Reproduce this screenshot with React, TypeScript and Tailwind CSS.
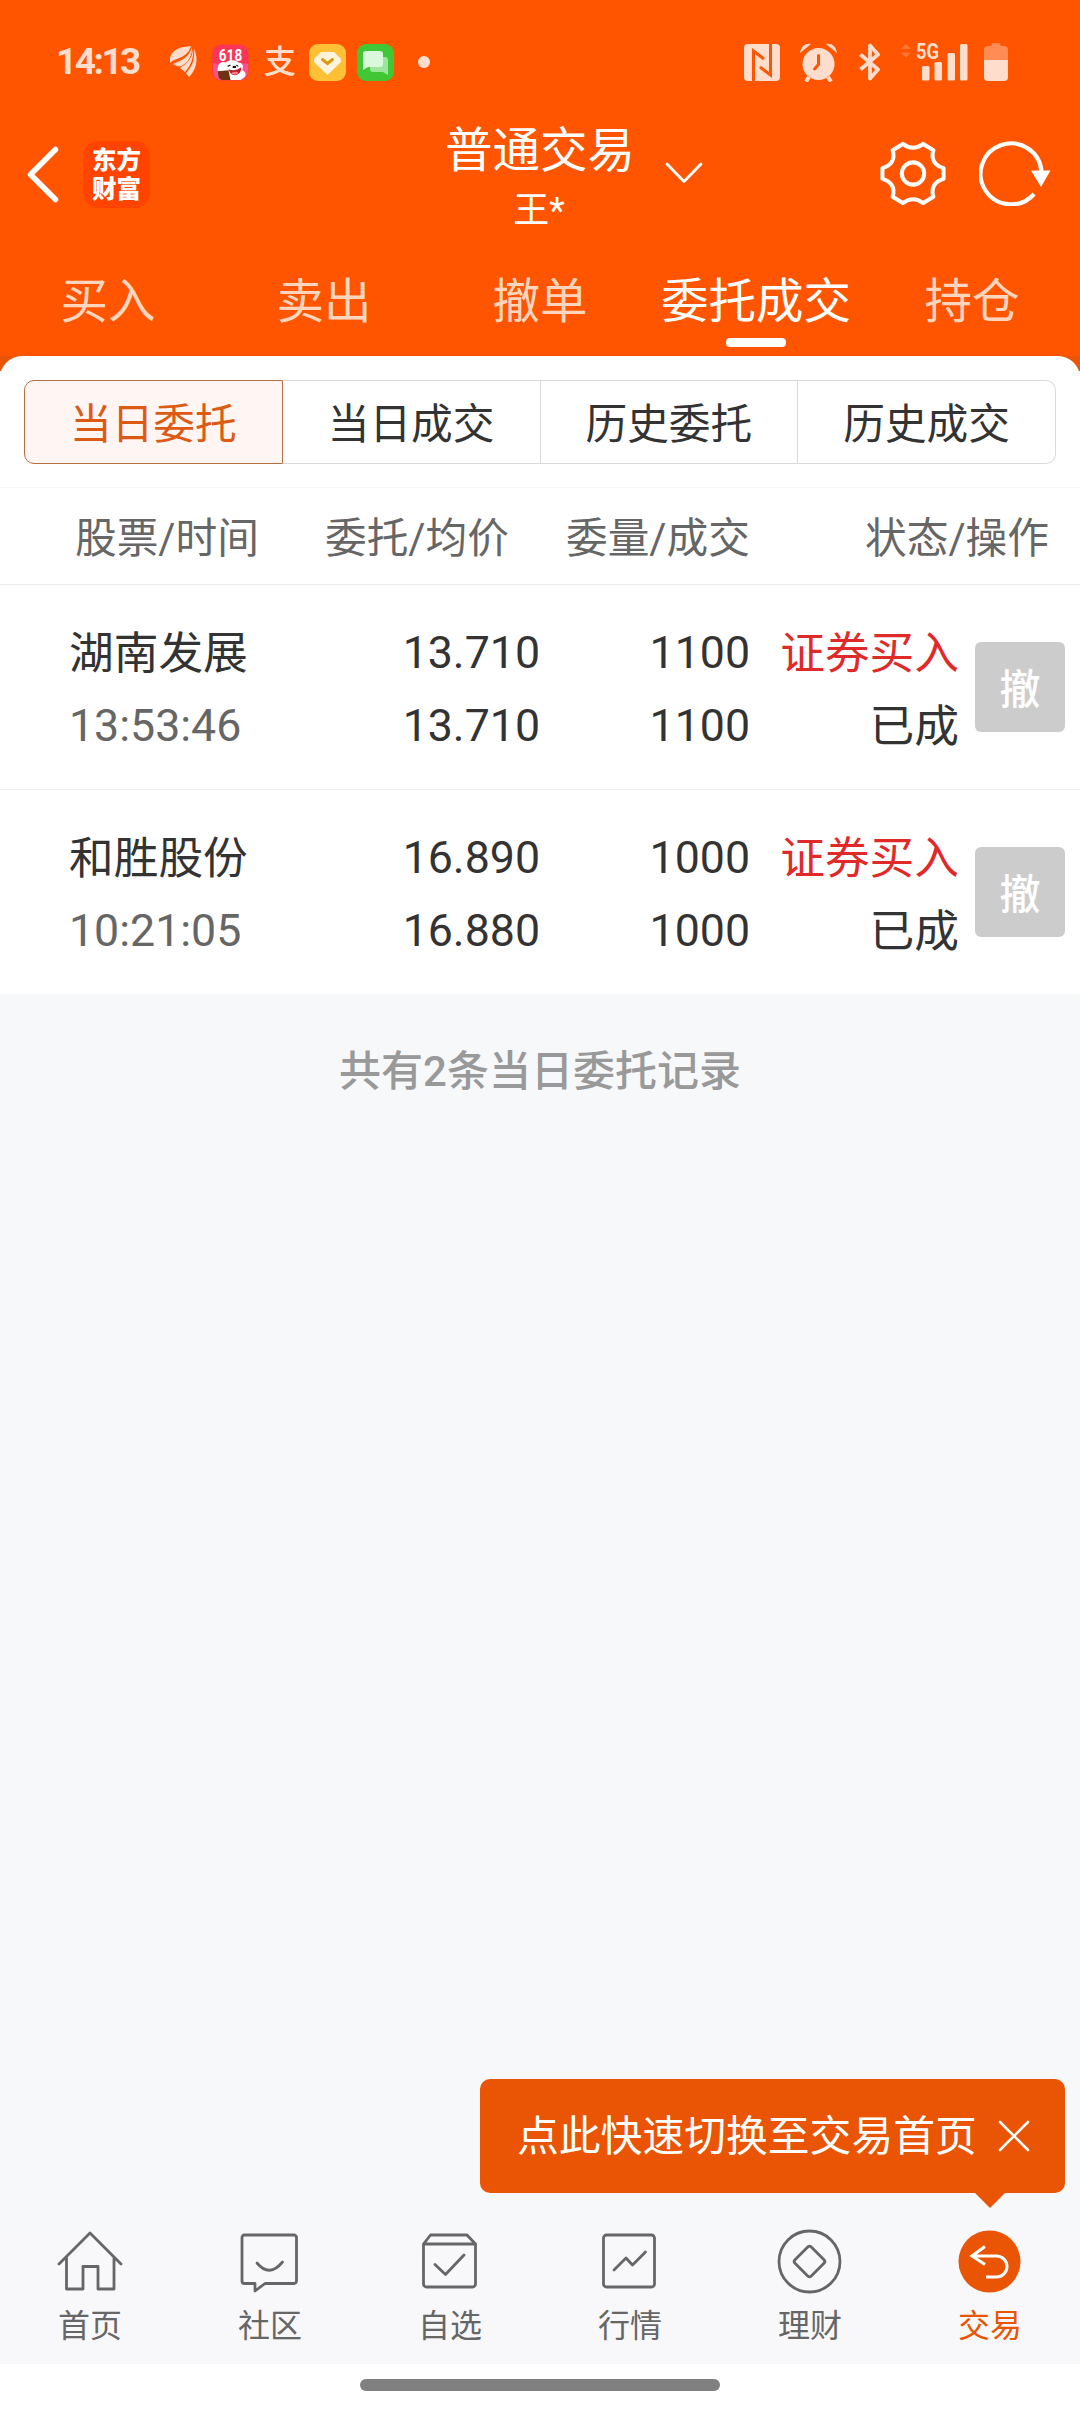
import type { ReactNode } from 'react';

const tabs = ['买入', '卖出', '撤单', '委托成交', '持仓'];
const segments = ['当日委托', '当日成交', '历史委托', '历史成交'];

const orders = [
  { name: '湖南发展', time: '13:53:46', price: '13.710', avg: '13.710', qty: '1100', filled: '1100' },
  { name: '和胜股份', time: '10:21:05', price: '16.890', avg: '16.880', qty: '1000', filled: '1000' },
];

function StatusBar() {
  return (
    <div className="flex h-[124px] items-center pl-[56px] pr-[72px] text-[#ffddcc]">
      <span className="w-[113px] text-[37px] leading-[40px] font-bold tracking-[-2.5px]">14:13</span>

      {/* Notification icons */}
      <svg className="mr-[15px]" width="28" height="32" viewBox="0 0 28 32" fill="currentColor">
        <path d="M22 0C12 1 3 3 1 12V17C7 11 18 13 22 0Z" />
        <path d="M23 1C20 11 14 14 4 18C8 21 12 21 14 19C20 15 23 9 23 1Z" />
        <path d="M24 2C24 11 19 17 11 22L16 26C23 18 25 10 24 2Z" />
        <path d="M25 3C30 13 27 24 20 31L17 27C24 20 26 12 25 3Z" />
      </svg>
      <svg className="mr-[14px]" width="37" height="37" viewBox="0 0 38 38">
        <rect x="0.500" y="0.500" width="37" height="37" rx="9" fill="#fb3558" />
        <path d="M1 20h36v8a9 9 0 0 1-9 9H10a9 9 0 0 1-9-9Z" fill="#f8528c" />
        <text x="19" y="17.500" textAnchor="middle" fontSize="17.500" fontWeight="700" fill="#fff" textLength="24" lengthAdjust="spacingAndGlyphs">618</text>
        <path d="M6 25C6 20 10 17 14 19C18 16 25 16 27 19C31 19 33 22 31 27C36 29 36 34 29 37H18L8 29C6 29 5 27 6 25Z" fill="#fff" />
        <path d="M16 23L19 21.500M27 23L25 21.500" stroke="#222" strokeWidth="1.200" />
        <ellipse cx="23" cy="23.500" rx="2" ry="1.200" fill="#111" />
        <path d="M17 26C21 28 26 27 30 24C30 30 27 32 23 32C20 32 18 29 17 26Z" fill="#b51f2b" />
        <path d="M20 30C22 28 26 28 27 30C25 32 22 32 20 30Z" fill="#ff7a86" />
        <path d="M6 28L17 27L19 37H10L7 35Z" fill="#6e3310" />
      </svg>
      <span className="mr-[11px] ml-px w-[34px] text-[32px] leading-[38px] font-medium">支</span>
      <svg className="mr-[11px]" width="37" height="37" viewBox="0 0 37 37">
        <rect width="37" height="37" rx="9" fill="#fec136" />
        <path d="M12 8H25L32 15V18L18.500 31L5 18V15Z" fill="#fff3dc" />
        <path d="M13.500 15.500L18.500 19.500L23.500 15.500" stroke="#dc9a10" strokeWidth="3" fill="none" strokeLinecap="round" />
      </svg>
      <svg className="mr-[24px]" width="37" height="37" viewBox="0 0 37 37">
        <rect width="37" height="37" rx="9" fill="#41c736" />
        <path d="M13 13H28a3 3 0 0 1 3 3V31L26 28H16a3 3 0 0 1-3-3Z" fill="#9be69a" />
        <path d="M9 7H23a3 3 0 0 1 3 3V20a3 3 0 0 1-3 3H11L6 26V10a3 3 0 0 1 3-3Z" fill="#d9f8dc" />
      </svg>
      <span className="h-3 w-3 rounded-full bg-[#ffddcc]" />

      {/* System icons */}
      <svg className="ml-auto mr-[20px]" width="36" height="37" viewBox="0 0 36 37">
        <rect width="36" height="37" rx="4" fill="currentColor" />
        <path d="M9.500 37V7L20 15M26.500 0V31L16 23" fill="none" stroke="#ff5500" strokeWidth="3" />
      </svg>
      <svg className="mr-[22px]" width="37" height="39" viewBox="0 0 37 39">
        <circle cx="18.500" cy="21" r="16" fill="currentColor" />
        <path d="M0 10C1 3 6 0 11 1ZM37 10C36 3 31 0 26 1Z" fill="currentColor" />
        <path d="M9 34L6 38.500M28 34L31 38.500" stroke="currentColor" strokeWidth="4" />
        <path d="M18.500 12.500V21.500L14.500 26" fill="none" stroke="#ff5500" strokeWidth="3" strokeLinecap="round" />
      </svg>
      <svg className="mr-[20px]" width="22" height="38" viewBox="0 0 22 38">
        <path d="M1.500 11.500L19 26.500L11 35.500V2.500L19 11.500L1.500 26.500" fill="none" stroke="currentColor" strokeWidth="3.800" strokeLinejoin="round" />
      </svg>
      <svg className="mt-[-8px] mr-[16px]" width="67" height="46" viewBox="0 -8 67 46" fill="currentColor">
        <path d="M0 6L5 1L10 6ZM0 9.500L5 14.500L10 9.500Z" fill="#ff7733" />
        <text x="15" y="16" fontSize="22" fontWeight="700" textLength="23" lengthAdjust="spacingAndGlyphs">5G</text>
        <rect x="21" y="23" width="7.500" height="14.500" rx="1.500" />
        <rect x="33.500" y="19" width="7.500" height="18.500" rx="1.500" />
        <rect x="46.500" y="10" width="7.500" height="27.500" rx="1.500" />
        <rect x="59" y="1" width="7.500" height="36.500" rx="1.500" />
      </svg>
      <svg width="24" height="38" viewBox="0 0 24 38">
        <path d="M0 17V7a4 4 0 0 1 4-4H7.500V2a2 2 0 0 1 2-2H14.500a2 2 0 0 1 2 2V3H20a4 4 0 0 1 4 4V17Z" fill="#ff8c54" />
        <path d="M0 17H24V34a4 4 0 0 1-4 4H4a4 4 0 0 1-4-4Z" fill="currentColor" />
      </svg>
    </div>
  );
}

function TitleBar() {
  return (
    <div className="grid h-[112px] grid-cols-[1fr_auto_1fr] items-start text-white">
      <div className="flex pt-[17px] pl-[26px]">
        <svg className="mt-[5px]" width="34" height="57" viewBox="0 0 34 57" fill="none" stroke="#fff" strokeWidth="5.500" strokeLinecap="round" strokeLinejoin="round">
          <path d="M29.500 3.500L4.500 28.500L29.500 53.500" />
        </svg>
        <div className="ml-[23px] flex h-[67px] w-[67px] flex-col items-center justify-center rounded-[15px] bg-[#ff4400] text-[24.500px] leading-[29px] font-black">
          <span>东方</span>
          <span>财富</span>
        </div>
      </div>
      <div className="flex flex-col items-center">
        <span className="pt-px text-[47.500px] leading-[53px]">普通交易</span>
        <span className="-ml-[2px] pt-[9px] text-[36px] leading-[48px]">王*</span>
      </div>
      <div className="flex items-start pr-[29px]">
        <svg className="mt-[37px] ml-[30px]" width="38" height="24" viewBox="0 0 38 24" fill="none" stroke="#fff" strokeWidth="2.800" strokeLinecap="round" strokeLinejoin="round">
          <path d="M2 3L19 20.500L36 3" />
        </svg>
        <svg className="mt-[17px] ml-auto mr-[33px]" width="66" height="65" viewBox="0 0 68 66" fill="none" stroke="#fff" strokeWidth="4.200" strokeLinejoin="round">
          <path d="M23.500 2.500Q34 10.500 44.500 2.500L55 9C52 19 57 25 65.500 27.500V38.500C57 41 52 47 55 57L44.500 63.500Q34 55.500 23.500 63.500L13 57C16 47 11 41 2.500 38.500V27.500C11 25 16 19 13 9Z" />
          <circle cx="34" cy="33" r="11.500" />
        </svg>
        <svg className="mt-[16px]" width="72" height="66" viewBox="0 0 72 66" fill="none" stroke="#fff" strokeWidth="4.200">
          <path d="M55 54A30.500 30.500 0 1 1 62.500 32" />
          <path d="M52 30.500H71.500L62 47Z" fill="#fff" stroke="none" />
        </svg>
      </div>
    </div>
  );
}

function OrderRow({ order }: { order: (typeof orders)[number] }) {
  return (
    <div className="flex h-[205px] border-t border-[#ececec] pt-[32px] pl-[69px] pr-[15px] text-[44.700px] leading-[73px] text-[#333333]">
      <div className="w-[231px]">
        <div className="pt-px leading-[72px]">{order.name}</div>
        <div className="text-[#666666]">{order.time}</div>
      </div>
      <div className="w-[240px] text-right">
        <div>{order.price}</div>
        <div>{order.avg}</div>
      </div>
      <div className="w-[210px] text-right">
        <div>{order.qty}</div>
        <div>{order.filled}</div>
      </div>
      <div className="w-[209px] pt-px text-right">
        <div className="text-[#e02a2a]">证券买入</div>
        <div>已成</div>
      </div>
      <button className="mt-[25px] ml-auto flex h-[90px] w-[90px] items-center justify-center rounded-md bg-[#cccccc] pt-[6px] text-[41px] leading-none font-medium text-white">撤</button>
    </div>
  );
}

function NavItem({ label, active, children }: { label: string; active?: boolean; children: ReactNode }) {
  return (
    <div className={`flex flex-1 flex-col items-center ${active ? 'text-[#e95504]' : 'text-[#666666]'}`}>
      <svg width="66" height="66" viewBox="0 0 66 66" fill="none" stroke="currentColor" strokeWidth="2.800" strokeLinejoin="round" strokeLinecap="round">
        {children}
      </svg>
      <span className="mt-[12px] text-[32px] leading-[40px]">{label}</span>
    </div>
  );
}

function BottomNav() {
  return (
    <div className="flex h-[136px] bg-[#f8f8fa]">
      <NavItem label="首页">
        <path d="M2 36L33 5L64 36M9.500 30V61H26V38.500H41V61H57V30" />
      </NavItem>
      <NavItem label="社区">
        <path d="M7.500 7H57a2.500 2.500 0 0 1 2.500 2.500V53a2.500 2.500 0 0 1-2.500 2.500H28L18 63V55.500H7.500a2.500 2.500 0 0 1-2.500-2.500V9.500A2.500 2.500 0 0 1 7.500 7Z" />
        <path d="M20 35Q32.500 50 45.500 34" />
      </NavItem>
      <NavItem label="自选">
        <path d="M6.500 16L13.500 7H50L58.500 16V56a3 3 0 0 1-3 3H9.500a3 3 0 0 1-3-3ZM6.500 16H58.500M18 36.500L28.500 46.500L47 27" />
      </NavItem>
      <NavItem label="行情">
        <rect x="6.500" y="7" width="51" height="52" rx="3" />
        <path d="M17 42L29 30L35.500 37L48.500 24" />
      </NavItem>
      <NavItem label="理财">
        <circle cx="32.500" cy="33.500" r="30.500" />
        <rect x="21" y="22" width="23" height="23" rx="2.500" transform="rotate(45 32.500 33.500)" />
      </NavItem>
      <NavItem label="交易" active>
        <circle cx="32.500" cy="33.500" r="31" fill="#e95504" stroke="none" />
        <path d="M28 18.500L15 28L28 36.500M16 28H39.500a10.500 10.500 0 0 1 0 21H29" stroke="#fff" strokeLinecap="butt" strokeLinejoin="miter" strokeWidth="3" />
      </NavItem>
    </div>
  );
}

export default function App() {
  return (
    <div className="flex h-[2412px] w-[1080px] flex-col overflow-hidden bg-[#f7f8fa] font-[Roboto,'Noto_Sans_CJK_SC',sans-serif]">
      <header className="h-[356px] bg-[#ff5500]">
        <StatusBar />
        <TitleBar />
        <div className="flex h-[120px] pt-[36px]">
          {tabs.map((tab) => (
            <div key={tab} className={`flex flex-1 flex-col items-center text-[47.500px] leading-[60px] whitespace-nowrap ${tab === '委托成交' ? 'text-white' : 'text-[#ffd5be]'}`}>
              {tab}
              {tab === '委托成交' && <span className="mt-[6px] h-[9px] w-[60px] rounded bg-white" />}
            </div>
          ))}
        </div>
      </header>

      <main className="bg-[linear-gradient(#e95504_15px,#fff_15px)]">
        <div className="h-[131px] rounded-t-[22px] bg-white px-[24px] pt-[24px]">
          <div className="flex h-[84px] text-[41.700px] leading-[87px] text-[#333333]">
            {segments.map((item, i) => (
              <div
                key={item}
                className={`flex-1 border text-center first:rounded-l-[10px] last:rounded-r-[10px] ${
                  i === 0 ? 'border-[#b96e42] bg-[#fff6f3] text-[#dc5a14]' : 'border-l-0 border-[#d7d9da]'
                }`}
              >
                {item}
              </div>
            ))}
          </div>
        </div>

        {/* Column titles */}
        <div className="flex h-[97px] border-t border-[#f4f4f4] pt-[6px] pl-[75px] pr-[31px] text-[41.700px] leading-[90px] text-[#666666]">
          <span className="w-[250px]">股票/时间</span>
          <span className="w-[241px]">委托/均价</span>
          <span>委量/成交</span>
          <span className="ml-auto">状态/操作</span>
        </div>

        {orders.map((order) => (
          <OrderRow key={order.name} order={order} />
        ))}
      </main>

      <p className="pt-[48px] text-center text-[42px] leading-[60px] font-medium text-[#999999]">共有2条当日委托记录</p>

      {/* Quick switch hint */}
      <div className="relative mt-auto mr-[15px] mb-[35px] flex h-[114px] w-[585px] items-center self-end rounded-[10px] bg-[#e95504] pl-[37px] text-[41.800px] text-white">
        <span className="pt-[2px] whitespace-nowrap">点此快速切换至交易首页</span>
        <svg className="ml-[21px]" width="32" height="32" viewBox="0 0 32 32" stroke="#fff" strokeWidth="2.600" strokeLinecap="round">
          <path d="M2 2L30 30M30 2L2 30" />
        </svg>
        <svg className="absolute top-[113px] left-[494px]" width="32" height="17" viewBox="0 0 32 17" fill="#e95504">
          <path d="M0 0H32L16 16Z" />
        </svg>
      </div>

      <BottomNav />
      <div className="flex h-[48px] justify-center bg-white pt-[15px]">
        <div className="h-3 w-[360px] rounded-full bg-[#808080]" />
      </div>
    </div>
  );
}
